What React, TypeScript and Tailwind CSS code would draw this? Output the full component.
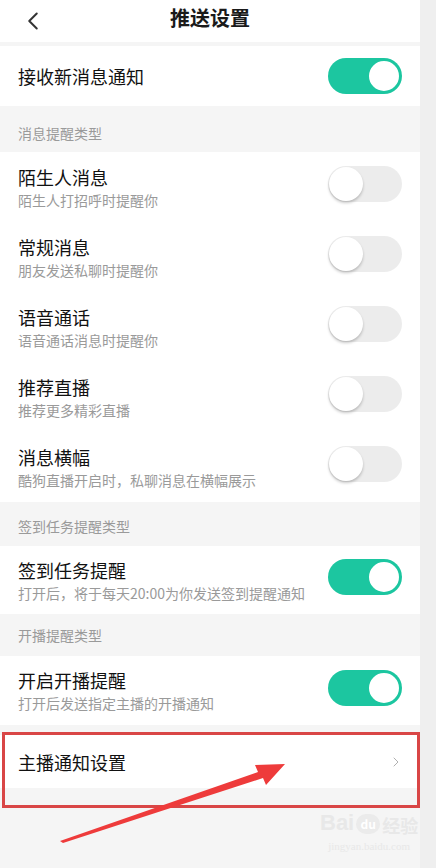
import { ChevronLeft, ChevronRight } from 'lucide-react';

const font = { fontFamily: '"Noto Sans CJK SC", "Noto Sans", sans-serif' };

const Toggle = ({ on }: { on: boolean }) => (
  <div
    className={`relative w-[74px] h-[36px] rounded-full shrink-0 mb-[6px] ${
      on ? 'bg-[#1cc6a0]' : 'bg-[#ececec]'
    }`}
  >
    <div
      className={`absolute top-[1px] w-[34px] h-[34px] rounded-full bg-white ${
        on ? 'right-[1px] border-2 border-[#1cc6a0]' : 'left-[1px] shadow-[0_2px_3px_rgba(0,0,0,0.22)]'
      }`}
    />
  </div>
);

const Section = ({ label, h, pt }: { label: string; h: string; pt: string }) => (
  <div className={`${h} ${pt} px-[18px] text-[14px] leading-[20px] text-[#9a9a9a]`}>{label}</div>
);

const Row = ({ title, sub, on, h }: { title: string; sub: string; on: boolean; h: string }) => (
  <div className={`${h} bg-white flex items-center justify-between pl-[18px] pr-[18px]`}>
    <div className="flex flex-col">
      <div className="text-[18px] leading-[24px] text-[#111]">{title}</div>
      <div className="text-[14px] leading-[20px] text-[#9a9a9a] mt-[1px]">{sub}</div>
    </div>
    <Toggle on={on} />
  </div>
);

const messageRows = [
  { title: '陌生人消息', sub: '陌生人打招呼时提醒你', on: false },
  { title: '常规消息', sub: '朋友发送私聊时提醒你', on: false },
  { title: '语音通话', sub: '语音通话消息时提醒你', on: false },
  { title: '推荐直播', sub: '推荐更多精彩直播', on: false },
  { title: '消息横幅', sub: '酷狗直播开启时，私聊消息在横幅展示', on: false },
];

export default function App() {
  return (
    <div className="relative w-[436px] h-[868px] flex bg-[#efefef] overflow-hidden" style={font}>
      <div className="w-[420px] h-full bg-[#f5f5f5] flex flex-col">
        <div className="h-[42px] bg-white flex items-center relative">
          <ChevronLeft className="absolute left-[18px] text-[#333]" size={30} strokeWidth={1.6} />
          <div className="w-full text-center text-[20px] font-bold text-[#1a1a1a] leading-[28px] -mt-[6px]">
            推送设置
          </div>
        </div>
        <div className="h-[4px]" />
        <div className="h-[60px] bg-white flex items-center justify-between px-[18px]">
          <div className="text-[18px] leading-[24px] text-[#111]">接收新消息通知</div>
          <div className="mt-[6px]">
            <Toggle on />
          </div>
        </div>
        <Section label="消息提醒类型" h="h-[46px]" pt="pt-[17px]" />
        {messageRows.map((r) => (
          <Row key={r.title} title={r.title} sub={r.sub} on={r.on} h="h-[70px]" />
        ))}
        <Section label="签到任务提醒类型" h="h-[44px]" pt="pt-[14px]" />
        <Row title="签到任务提醒" sub="打开后，将于每天20:00为你发送签到提醒通知" on h="h-[68px]" />
        <Section label="开播提醒类型" h="h-[42px]" pt="pt-[11px]" />
        <Row title="开启开播提醒" sub="打开后发送指定主播的开播通知" on h="h-[69px]" />
        <div className="h-[10px]" />
        <div className="h-[53px] bg-white flex items-center justify-between pl-[18px] pr-[16px]">
          <div className="text-[18px] leading-[24px] text-[#111]">主播通知设置</div>
          <ChevronRight size={16} strokeWidth={1.5} className="text-[#b0b0b0]" />
        </div>
      </div>

      {/* annotation box */}
      <div className="absolute left-[2px] top-[732px] w-[418px] h-[76px] border-[3px] border-[#d94646]" />

      {/* annotation arrow */}
      <svg className="absolute left-0 top-0" width="436" height="868" viewBox="0 0 436 868">
        <polygon
          points="60,841 258,772 255,765 285,764 266,785 263,778 63,843"
          fill="#ee3b3b"
        />
      </svg>

      {/* watermark */}
      <div className="absolute left-[320px] top-[812px] flex flex-col items-center text-[#e8e8e8]">
        <div className="flex items-end leading-none">
          <span className="text-[22px] font-bold" style={{ fontFamily: '"Liberation Sans", sans-serif' }}>
            Bai
          </span>
          <span className="ml-[2px] w-[24px] h-[20px] rounded-full bg-[#ebebeb] text-white text-[12px] font-bold flex items-center justify-center">
            du
          </span>
          <span className="ml-[2px] text-[18px] font-bold">经验</span>
        </div>
        <div className="text-[11px] leading-[16px] mt-[4px]" style={{ fontFamily: '"Liberation Serif", serif' }}>
          jingyan.baidu.com
        </div>
      </div>
    </div>
  );
}
